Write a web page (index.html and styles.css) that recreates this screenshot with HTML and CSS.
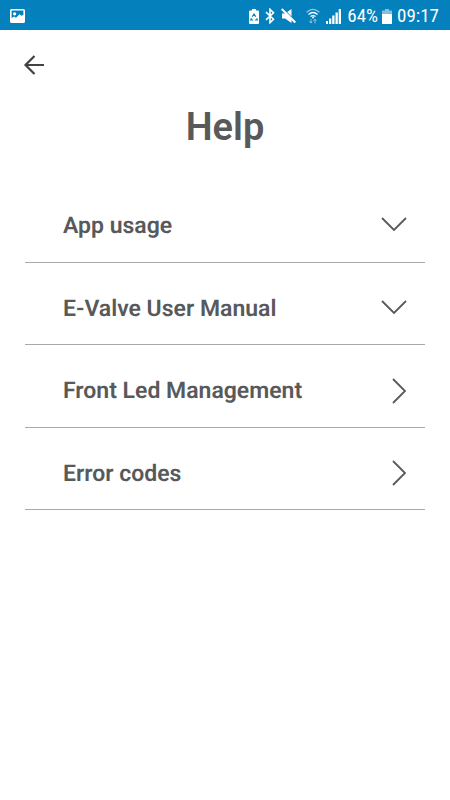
FILE: index.html
```html
<!DOCTYPE html>
<html lang="en">
<head>
<meta charset="utf-8">
<meta name="viewport" content="width=device-width, initial-scale=1">
<title>Help</title>
<link rel="stylesheet" href="styles.css">
</head>
<body>
<div class="status">
  <svg class="photo" width="15" height="14" viewBox="0 0 15 14"><rect x=".8" y=".8" width="13.4" height="12.4" rx=".8" fill="none" stroke="#fff" stroke-width="1.6"/><circle cx="4.6" cy="4.8" r="1.6" fill="#fff"/><path d="M1 9.500l3-2 2 1.200 3.500-3.500 2 1.500 2.500-1V13H1z" fill="#fff"/></svg>
  <div class="tray">
    <svg width="10" height="15" viewBox="0 0 10 15"><path d="M3 0h4v1.500h2q1 0 1 1V14q0 1-1 1H1q-1 0-1-1V2.500q0-1 1-1h2z" fill="#fff"/><path d="M3.200 7.800L5 5l1.800 2.800M7.700 9.300l.6 1.700H5.800M4.200 11H1.700l.8-1.700" fill="none" stroke="#0480bd" stroke-width="1.200"/></svg>
    <svg width="10" height="16" viewBox="0 0 10 16"><path d="M1 4.200l7.500 7L5 14.700V1.300l3.500 3.500-7.500 7" fill="none" stroke="#fff" stroke-width="1.600"/></svg>
    <svg width="15" height="16" viewBox="0 0 15 16"><path d="M1 5.500h3L10.500 1v14L4 10.500H1z" fill="#fff"/><path d="M1.500 .2L15 13.800" stroke="#0480bd" stroke-width="1.200"/><path d="M.7 1L14.300 14.500" stroke="#fff" stroke-width="2"/></svg>
    <svg class="wifi" width="14" height="16" viewBox="0 0 14 16"><g fill="none" stroke="#fff" stroke-width="1.300"><path d="M.6 4.300Q7-1.600 13.400 4.300" opacity=".55"/><path d="M2.500 6.500q4.500-4 9 0M4.500 8.600q2.500-2 5 0"/></g><circle cx="7" cy="9.500" r="1" fill="#fff"/><path d="M5 11v4M3.500 13.200L5 15l1.200-1.500M9 15.500v-4M7.700 13L9 11.200l1.500 1.800" fill="none" stroke="#fff" opacity=".5"/></svg>
    <svg width="15" height="15" viewBox="0 0 15 15"><path d="M0 12h2v3H0zM3 9.500h2.300V15H3zM6.200 6.500h2.300V15H6.200zM9.500 3.500h2.300V15H9.500zM12.700 0H15v15h-2.300z" fill="#fff"/></svg>
    <span class="percent">64%</span>
    <svg class="battery" width="10" height="15" viewBox="0 0 10 15"><path d="M3 0h4v1.500h3V5H0V1.500h3z" fill="#fff" opacity=".5"/><path d="M0 5h10v10H0z" fill="#fff"/></svg>
    <time>09:17</time>
  </div>
</div>
<header>
  <button class="back" type="button" aria-label="Back"><svg width="22" height="22" viewBox="0 0 22 22"><path d="M21 11H3M11.500 2L2.500 11l9 9" fill="none" stroke="#424244" stroke-width="2.200"/></svg></button>
  <h1>Help</h1>
</header>
<main class="list">
  <button type="button" aria-expanded="false">App usage<svg class="down" width="26" height="14" viewBox="0 0 26 14"><path d="M1 1l12 12L25 1"/></svg></button>
  <button type="button" aria-expanded="false">E-Valve User Manual<svg class="down" width="26" height="14" viewBox="0 0 26 14"><path d="M1 1l12 12L25 1"/></svg></button>
  <button type="button">Front Led Management<svg width="15" height="26" viewBox="0 0 15 26"><path d="M1 1l12 12L1 25"/></svg></button>
  <button type="button">Error codes<svg width="15" height="26" viewBox="0 0 15 26"><path d="M1 1l12 12L1 25"/></svg></button>
</main>
</body>
</html>
```
FILE: styles.css
```css
* { box-sizing: border-box; }
body {
  margin: 0;
  background: #fff;
  color: #58595b;
  font-family: Roboto, "Liberation Sans", sans-serif;
}
svg { display: block; flex: none; }
button {
  border: 0;
  background: none;
  color: inherit;
  font: inherit;
}
.status {
  display: flex;
  align-items: center;
  justify-content: space-between;
  height: 30px;
  padding: 2px 11px 0 10px;
  background: #0480bd;
  color: #fff;
  font-size: 19px;
}
.tray {
  display: flex;
  align-items: center;
  gap: 6px;
}
.wifi { margin-left: 4px; }
.battery { margin: 0 -1px 0 -2px; }
.percent, time {
  font-family: "Roboto Condensed", Roboto, sans-serif;
  line-height: 20px;
}
.back {
  display: block;
  margin: 12px 0 0 11px;
  padding: 12px;
}
h1 {
  margin: 17px 0 0;
  font-size: 38px;
  font-weight: 600;
  line-height: 44px;
  text-align: center;
}
.list {
  display: grid;
  grid-auto-rows: 1fr;
  min-height: 330px;
  margin: 31px 25px 0;
}
.list button {
  display: flex;
  align-items: center;
  justify-content: space-between;
  padding: 10px 18px 0 38px;
  border-bottom: 1px solid #a9a9ab;
  font-size: 23px;
  font-weight: 600;
  text-align: left;
  text-rendering: geometricPrecision;
}
.list path {
  fill: none;
  stroke: #58595b;
  stroke-width: 1.800;
}
.list .down { margin-bottom: 3px; }
```
